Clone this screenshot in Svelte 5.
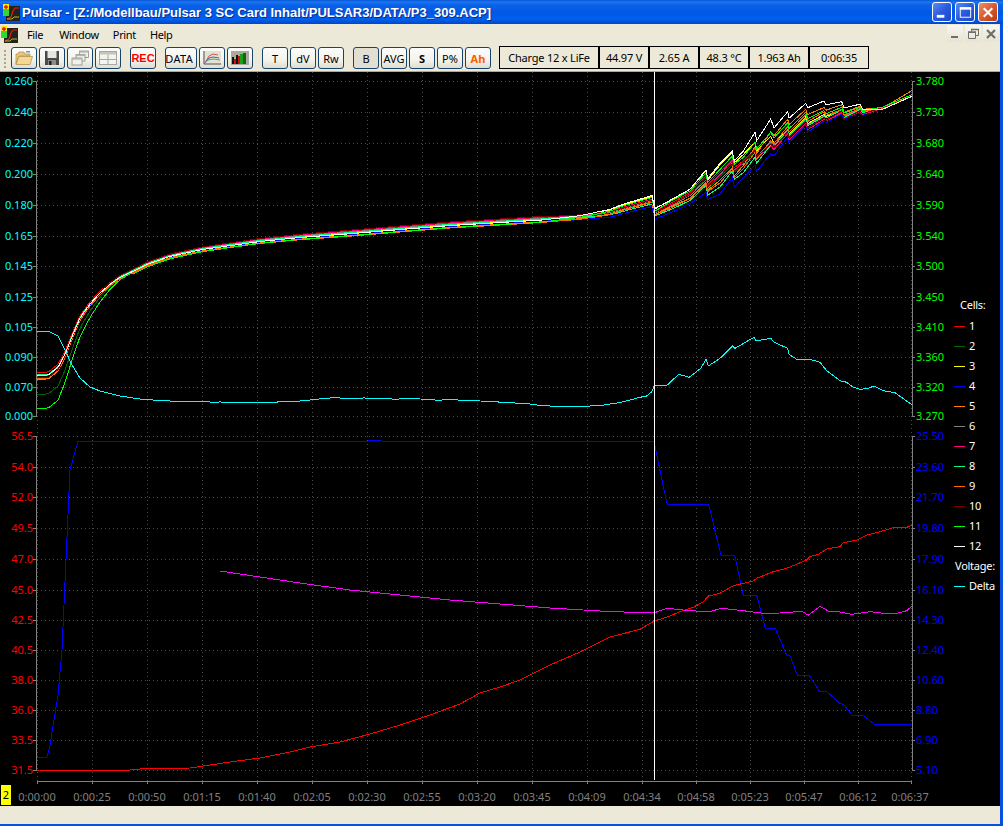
<script>
  const topY = [81, 112, 143, 174, 205, 236, 266, 297, 327, 357, 387, 416];
  const lowY = [436, 467, 497, 528, 559, 590, 620, 650, 680, 710, 740, 770];
  const gridX = [37, 92, 147, 202, 257, 312, 367, 422, 477, 532, 587, 642, 696, 750, 804, 858, 911];
  const OFF = 72;

  const axes = [
    { cls: 'cyan', ys: topY, side: 'l', labels: ['0.260', '0.240', '0.220', '0.200', '0.180', '0.165', '0.145', '0.125', '0.105', '0.090', '0.070', '0.000'] },
    { cls: 'green', ys: topY, side: 'r', labels: ['3.780', '3.730', '3.680', '3.640', '3.590', '3.540', '3.500', '3.450', '3.410', '3.360', '3.320', '3.270'] },
    { cls: 'red', ys: lowY, side: 'l', labels: ['56.5', '54.0', '52.0', '49.5', '47.0', '45.0', '42.5', '40.5', '38.0', '36.0', '33.5', '31.5'] },
    { cls: 'blue', ys: lowY, side: 'r', labels: ['25.50', '23.60', '21.70', '19.80', '17.90', '16.10', '14.30', '12.40', '10.60', '8.80', '6.90', '5.10'] }
  ];
  const times = ['0:00:00', '0:00:25', '0:00:50', '0:01:15', '0:01:40', '0:02:05', '0:02:30', '0:02:55', '0:03:20', '0:03:45', '0:04:09', '0:04:34', '0:04:58', '0:05:23', '0:05:47', '0:06:12', '0:06:37'];

  // f: place in the spread after the cursor (1 = upper), l: same late in the charge,
  // b: place in the band before the cursor (-.5 = upper), o: offset at the start
  const cells = [
    { n: 1, c: '#ff0000', f: 0.68, l: 0.2, b: -0.3, o: -3 },
    { n: 2, c: '#006400', f: 0.52, l: 0.28, b: 0, o: 18 },
    { n: 3, c: '#ffff00', f: 0.92, l: 0.35, b: 0.05, o: -1 },
    { n: 4, c: '#0000ff', f: 0, l: 0, b: 0.3, o: -1 },
    { n: 5, c: '#ff8000', f: 0.42, l: 0.72, b: 0.4, o: 2 },
    { n: 6, c: '#808080', f: 0.56, l: 0.3, b: -0.2, o: 0 },
    { n: 7, c: '#ff0080', f: 0.64, l: 0.1, b: -0.4, o: 3 },
    { n: 8, c: '#00ff80', f: 0.24, l: 0.25, b: -0.1, o: -1 },
    { n: 9, c: '#ff6600', f: 0.36, l: 0.42, b: 0.5, o: 1 },
    { n: 10, c: '#800000', f: 0.6, l: 0.18, b: -0.5, o: 3 },
    { n: 11, c: '#00ff00', f: 0.82, l: 0.55, b: 0.45, o: 31 },
    { n: 12, c: '#ffffff', f: 1, l: 1, b: 0.1, o: -1 }
  ];

  const base = [[37, 376], [48, 376], [58, 368], [65, 355], [72, 337], [80, 318], [90, 304], [100, 293], [110, 284], [120, 277], [135, 270], [147, 264], [170, 256], [203, 249], [260, 241], [300, 237], [352, 233], [400, 229], [450, 225], [500, 222], [550, 219], [580, 217], [610, 213], [630, 207], [652, 201]];

  // x, upper edge, lower edge, in the frame of a 3x crop starting at (640,80)
  const fan = [[44, 385, 418], [100, 355, 395], [150, 325, 372], [198, 268, 335], [203, 295, 362], [240, 250, 340], [277, 212, 295], [283, 240, 320], [310, 215, 295], [345, 158, 255], [350, 180, 272], [392, 118, 220], [402, 142, 225], [443, 98, 170], [447, 112, 188], [497, 70, 135], [503, 85, 155], [552, 63, 122], [558, 75, 130], [605, 67, 100], [612, 85, 122], [660, 72, 95], [668, 85, 105], [730, 85, 82], [815, 46, 48]];

  function jitter(i, k) {
    const v = Math.sin(i * 12.9898 + k * 78.233) * 43758.5453;
    return (v - Math.floor(v)) - 0.5;
  }

  function baseAt(x) {
    for (let k = 1; k < base.length; k++) {
      if (x <= base[k][0]) {
        const [x0, y0] = base[k - 1];
        const [x1, y1] = base[k];
        return y0 + ((x - x0) / (x1 - x0)) * (y1 - y0);
      }
    }
    return base[base.length - 1][1];
  }

  function cellPoints(cell, i) {
    const pts = [];
    for (let x = 37; x <= 652; x += 3) {
      const decay = x <= 58 ? 1 : x >= 130 ? 0 : Math.pow((130 - x) / 72, 1.6);
      const spread = x < 350 ? 2.5 + ((x - 37) / 313) * 3.5 : x < 560 ? 6 : 6 + ((x - 560) / 92) * 5;
      const w = x < 540 ? 0 : Math.min(1, (x - 540) / 80);
      const place = cell.b * (1 - w) + (0.5 - cell.f) * w;
      const extra = cell.n === 11 && x > 130 && x < 260 ? (1 - (x - 130) / 130) * 1.5 : 0;
      pts.push([x, baseAt(x) + cell.o * decay + place * spread + extra]);
    }
    fan.forEach(([zx, up, low], k) => {
      const t = zx < 300 ? 0 : zx > 420 ? 1 : (zx - 300) / 120;
      const f = cell.f * (1 - t) + cell.l * t;
      let zy = low + (up - low) * f + jitter(i, k) * 6;
      if (cell.n === 5 && k === fan.length - 1) zy = 32;
      pts.push([640 + zx / 3, 80 + zy / 3]);
    });
    return pts;
  }

  function zoomed(list, ox, oy) {
    return list.map(([x, y]) => [ox + x / 3, oy + y / 3]);
  }
  function wiggle(list) {
    const out = [];
    list.forEach((p, k) => {
      out.push(p);
      const q = list[k + 1];
      if (q && q[0] - p[0] > 15) {
        const n = Math.floor((q[0] - p[0]) / 8);
        for (let s = 1; s < n; s++) {
          const t = s / n;
          out.push([p[0] + (q[0] - p[0]) * t, p[1] + (q[1] - p[1]) * t + jitter(k, s) * 1.6]);
        }
      }
    });
    return out;
  }
  function str(pts) {
    return pts.map(([x, y]) => `${x.toFixed(1)},${(y - OFF).toFixed(1)}`).join(' ');
  }

  const delta = str([...wiggle([[37, 331], [48, 331], [58, 336], [65, 350], [72, 365], [80, 378], [90, 387], [100, 391], [120, 396], [140, 399], [180, 402], [220, 402], [260, 402], [300, 401], [340, 398], [380, 399], [420, 399], [480, 401], [530, 404], [560, 406], [590, 406], [610, 404], [630, 400]]),
    ...zoomed([[0, 202], [20, 198], [35, 185], [44, 165], [82, 165], [116, 133], [148, 142], [182, 115], [198, 88], [205, 108], [240, 85], [278, 48], [285, 55], [342, 22], [348, 33], [392, 25], [402, 37], [443, 55], [447, 73], [470, 88], [510, 88], [540, 97], [560, 122], [600, 152], [620, 157], [640, 172], [660, 178], [680, 176], [703, 168], [730, 182], [765, 188], [815, 224]], 640, 330)]);

  const current = str([[37, 757], [47, 757], [50, 745], [58, 695], [62, 650], [66, 560], [70, 470], [78, 441], [368, 441], [370, 440], [380, 440], [382, 441], [654, 441], [664, 490],
    ...zoomed([[82, 43], [206, 43], [243, 196], [284, 196], [310, 316], [350, 316], [376, 414], [405, 414], [440, 495], [450, 497], [472, 555], [507, 555], [538, 603], [558, 603], [600, 640], [612, 645], [637, 676], [670, 676], [703, 703], [815, 703]], 640, 490)]);

  const voltage = str([[37, 770], [130, 770], [140, 769], [190, 768], [230, 762], [260, 758], [290, 752], [310, 747], [340, 742], [370, 734], [400, 725], [430, 715], [460, 704], [480, 693], [500, 687], [520, 680], [550, 665], [580, 652], [610, 637],
    ...zoomed([[0, 418], [44, 392], [80, 382], [120, 365], [160, 352], [190, 335], [205, 318], [240, 310], [280, 287], [340, 273], [350, 265], [400, 245], [440, 235], [500, 210], [510, 200], [535, 193], [560, 177], [600, 170], [610, 158], [650, 150], [680, 135], [720, 125], [760, 113], [800, 112], [815, 106]], 640, 490)]);

  const temp = str([[220, 571], [260, 577], [300, 583], [350, 590], [400, 595], [450, 600], [500, 604], [550, 608], [600, 611],
    ...zoomed([[0, 368], [44, 368], [80, 355], [130, 360], [205, 366], [245, 355], [300, 361], [370, 370], [420, 369], [470, 365], [490, 366], [505, 376], [540, 349], [565, 363], [600, 366], [635, 373], [690, 365], [730, 370], [770, 370], [800, 362], [815, 349]], 640, 490)]);

  const cellLines = cells.map((c, i) => ({ c: c.c, pts: str(cellPoints(c, i)) }));
  const legendY = cells.map((c, i) => 326 + i * 20 - OFF);
  const panels = [
    { t: 'Charge 12 x LiFe', w: 100 },
    { t: '44.97 V', w: 50 },
    { t: '2.65 A', w: 50 },
    { t: '48.3 °C', w: 50 },
    { t: '1.963 Ah', w: 60 },
    { t: '0:06:35', w: 60 }
  ];
</script>

{#snippet appIcon()}
  <svg class="appicon" viewBox="0 0 17 17" width="17" height="17">
    <rect x="3" y="2" width="14" height="15" fill="#20241c" />
    <path d="M4 15 L8 13 L10 7 L12 4 L16 4" fill="none" stroke="#e02010" stroke-width="1.2" />
    <path d="M4 15 H9 L11 13 H16" fill="none" stroke="#c8b030" stroke-width="1" />
    <rect x="0" y="0" width="6" height="5" fill="#ffe800" />
    <rect x="0" y="5" width="6" height="7" fill="#30d830" />
    <path d="M3 1 V5 M1 3 H5" stroke="#e81010" stroke-width="1.4" />
  </svg>
{/snippet}

<div class="win">
  <header class="title">
    {@render appIcon()}
    <span class="caption">Pulsar - [Z:/Modellbau/Pulsar 3 SC Card Inhalt/PULSAR3/DATA/P3_309.ACP]</span>
    <div class="caps">
      <button class="cap" aria-label="Minimize"><svg viewBox="0 0 19 19" width="19" height="19"><rect x="4" y="12" width="8" height="3" fill="#fff" /></svg></button>
      <button class="cap" aria-label="Maximize"><svg viewBox="0 0 19 19" width="19" height="19"><rect x="4.5" y="4.5" width="11" height="10" fill="none" stroke="#fff" /><rect x="4" y="4" width="12" height="2.5" fill="#fff" /></svg></button>
      <button class="cap close" aria-label="Close"><svg viewBox="0 0 19 19" width="19" height="19"><path d="M5 5 L14 14 M14 5 L5 14" stroke="#fff" stroke-width="2.2" /></svg></button>
    </div>
  </header>

  <div class="body">
    <nav class="menubar">
      <span class="mdi-icon">{@render appIcon()}</span>
      <span class="menu first">File</span>
      <span class="menu second">Window</span>
      <span class="menu">Print</span>
      <span class="menu">Help</span>
      <div class="mdi">
        <button class="mdib" aria-label="Minimize"><svg viewBox="0 0 16 16" width="16" height="16"><rect x="4" y="10" width="7" height="2" fill="#6f6f6a" /></svg></button>
        <button class="mdib" aria-label="Restore"><svg viewBox="0 0 16 16" width="16" height="16"><path d="M6.5 5.5 V3.5 H13.5 V9.5 H11 M3.5 6.5 H10.5 V12.5 H3.5 Z" fill="none" stroke="#6f6f6a" /><path d="M3 6 H11 M6 3.5 H14" stroke="#6f6f6a" stroke-width="1.4" /></svg></button>
        <button class="mdib" aria-label="Close"><svg viewBox="0 0 16 16" width="16" height="16"><path d="M4 4 L12 12 M12 4 L4 12" stroke="#6f6f6a" stroke-width="2.2" /></svg></button>
      </div>
    </nav>

    <div class="toolbar">
      <span class="grip"></span>
      <div class="group">
        <button class="tb" aria-label="Open">
          <svg viewBox="0 0 20 16" width="20" height="16"><path d="M2 14 V4 H4 L5 2 H10 L11 4 H16 V6 H5 L2 14 Z" fill="#e8c878" stroke="#b08a48" stroke-width=".7" /><path d="M2 14.500 L5 6.500 H18.500 L16 14.500 Z" fill="#f5d992" stroke="#b08a48" stroke-width=".7" /><rect x="12" y="1" width="4" height="1.500" fill="#4aa0d8" /></svg>
        </button>
        <button class="tb" aria-label="Save">
          <svg viewBox="0 0 16 16" width="16" height="16"><path d="M1 1 H15 V15 H1 Z" fill="#4a4a4a" /><rect x="3.500" y="1" width="9" height="7" fill="#e6e6e0" /><rect x="4" y="10" width="8" height="5" fill="#8c8c8c" /><rect x="5" y="11" width="2.500" height="4" fill="#222" /></svg>
        </button>
        <button class="tb" aria-label="Cascade">
          <svg viewBox="0 0 20 16" width="20" height="16"><g fill="#f2f2ec" stroke="#8d8d88" stroke-width=".8"><rect x="9.500" y="1" width="9" height="6.500" /><rect x="6" y="4.500" width="9" height="6.500" /><rect x="2" y="8" width="10" height="7" /></g><g fill="#b4b4ae"><rect x="9.500" y="1" width="9" height="1.600" /><rect x="6" y="4.500" width="9" height="1.600" /><rect x="2" y="8" width="10" height="1.600" /></g></svg>
        </button>
        <button class="tb" aria-label="Tile">
          <svg viewBox="0 0 18 14" width="18" height="14"><rect x=".5" y=".5" width="17" height="13" fill="#f4f4ee" stroke="#a8a8a2" /><rect x="1" y="1" width="16" height="2.500" fill="#c4c4be" /><path d="M9 3.500 V13.500 M1 8.500 H17" stroke="#a8a8a2" fill="none" /></svg>
        </button>
      </div>
      <div class="group"><button class="tb rec">REC</button></div>
      <div class="group">
        <button class="tb data">DATA</button>
        <button class="tb" aria-label="Line chart">
          <svg viewBox="0 0 18 14" width="18" height="14"><rect width="18" height="14" fill="#e4e1d2" /><path d="M1 0 V13 H18" fill="none" stroke="#555" /><path d="M2 12 L6 5 L10 3 L15 4" fill="none" stroke="#e05050" /><path d="M2 12 L6 7 L10 6 L16 7" fill="none" stroke="#4060d0" /><path d="M2 12 L5 9 L10 8 L17 9" fill="none" stroke="#50b050" /></svg>
        </button>
        <button class="tb" aria-label="Bar chart">
          <svg viewBox="0 0 18 14" width="18" height="14"><rect width="18" height="14" fill="#a9a9a2" /><rect x="1" y="6" width="2" height="7" fill="#111" /><rect x="3" y="8" width="2" height="5" fill="#d01010" /><rect x="5" y="4" width="2" height="9" fill="#111" /><rect x="7" y="5" width="2" height="8" fill="#d01010" /><rect x="9" y="3" width="3" height="10" fill="#18a018" /><rect x="12" y="2" width="3" height="11" fill="#0d6a0d" /></svg>
        </button>
      </div>
      <div class="group">
        <button class="tb">T</button>
        <button class="tb">dV</button>
        <button class="tb">Rw</button>
      </div>
      <div class="group">
        <button class="tb on">B</button>
        <button class="tb">AVG</button>
        <button class="tb bold">S</button>
        <button class="tb">P%</button>
        <button class="tb ah">Ah</button>
      </div>
      <div class="panels">
        {#each panels as p}
          <span class="panel" class:w50={p.w === 50} class:w60={p.w === 60} class:w100={p.w === 100}>{p.t}</span>
        {/each}
      </div>
    </div>

    <div class="chart">
      <svg viewBox="0 0 1000 734" width="1000" height="734">
        <g class="grid">
          {#each [...topY, ...lowY] as y}
            <line x1="37" x2="911" y1={y - OFF + 0.5} y2={y - OFF + 0.5} />
          {/each}
          {#each gridX as x}
            <line x1={x + 0.5} x2={x + 0.5} y1="0" y2="709" />
          {/each}
        </g>

        <g class="axis">
          <path d="M33 9.500 H36.500 V344.500 H33 M33 364.500 H36.500 V698.500 H33" />
          <path d="M915 9.500 H912.500 V344.500 H915 M915 364.500 H912.500 V698.500 H915" />
          <path d="M37 709.500 H911" />
          {#each axes as a}
            {#each a.ys as y}
              {#if a.side === 'l'}
                <path d="M33 {y - OFF + 0.5} H36" />
              {:else}
                <path d="M913 {y - OFF + 0.5} H915" />
              {/if}
            {/each}
          {/each}
          {#each gridX as x}
            <path d="M{x + 0.5} 709 V712" />
          {/each}
        </g>

        {#each axes as a}
          {#each a.labels as label, i}
            <text class="val {a.cls}" class:end={a.side === 'l'} x={a.side === 'l' ? 33 : 916} y={a.ys[i] - OFF + 4}>{label}</text>
          {/each}
        {/each}

        {#each cellLines as l}
          <polyline class="trace" points={l.pts} stroke={l.c} />
        {/each}
        <polyline class="trace" points={delta} stroke="#00ffff" />
        <polyline class="trace" points={current} stroke="#0000ff" />
        <polyline class="trace" points={voltage} stroke="#ff0000" />
        <polyline class="trace" points={temp} stroke="#ff00ff" />

        <line class="cursor" x1="654.5" x2="654.5" y1="0" y2="708" />

        <rect x="1" y="713" width="10" height="20" fill="#ffff00" />
        <text class="badge" x="6" y="727">2</text>

        {#each times as t, i}
          <text class="time" x={gridX[i] + (i === 16 ? -1 : 0)} y="729">{t}</text>
        {/each}

        <text class="leg" x="960" y="237">Cells:</text>
        {#each cells as c, i}
          <line class="key" x1="954" x2="965" y1={legendY[i] + 0.5} y2={legendY[i] + 0.5} stroke={c.c} />
          <text class="leg" x="969" y={legendY[i] + 4}>{c.n}</text>
        {/each}
        <text class="leg" x="955" y="498">Voltage:</text>
        <line class="key" x1="954" x2="965" y1="514.500" y2="514.500" stroke="#00ffff" />
        <text class="leg" x="969" y="518">Delta</text>
      </svg>
    </div>

    <footer class="status"></footer>
  </div>
</div>

<style>
  :global(body) { margin: 0; background: #000; }
  .win {
    width: 1003px;
    height: 826px;
    display: flex;
    flex-direction: column;
    overflow: hidden;
    font-family: "Noto Sans", "Open Sans", sans-serif;
    font-size: 11px;
    color: #000;
  }
  .title {
    height: 24px;
    flex: none;
    display: flex;
    align-items: center;
    padding-left: 3px;
    box-sizing: border-box;
    background: linear-gradient(180deg, #0a54d4 0, #1a78f2 8%, #0b62e8 20%, #0058e4 55%, #0060ee 80%, #0046c4 100%);
  }
  .appicon { display: block; flex: none; }
  .caption {
    margin-left: 2px;
    color: #fff;
    font: bold 13px "Liberation Sans", Arial, sans-serif;
    text-shadow: 1px 1px 0 #0a2a90;
    white-space: nowrap;
  }
  .caps { margin-left: auto; margin-right: 5px; display: flex; gap: 3px; }
  .cap {
    width: 20px;
    height: 20px;
    padding: 0;
    border: 1px solid #fff;
    border-radius: 3px;
    display: flex;
    align-items: center;
    justify-content: center;
    background: linear-gradient(135deg, #5a8cf0 0, #2a5ae0 50%, #1c48c8 100%);
  }
  .cap.close { background: linear-gradient(135deg, #e89070 0, #d85a30 50%, #b83a10 100%); }

  .body {
    flex: 1;
    min-height: 0;
    display: flex;
    flex-direction: column;
    background: #ece9d8;
    border-right: 3px solid #0a50e0;
    border-bottom: 2px solid #0a50e0;
  }
  .menubar {
    height: 23px;
    flex: none;
    box-sizing: border-box;
    padding-bottom: 2px;
    display: flex;
    align-items: center;
  }
  .mdi-icon { width: 18px; padding-left: 1px; flex: none; }
  .menu { margin-left: 14px; letter-spacing: -0.35px; }
  .menu.first { margin-left: 8px; }
  .menu.second { margin-left: 16px; }
  .mdi { margin-left: auto; margin-right: 1px; display: flex; gap: 2px; align-self: flex-start; margin-top: 1px; }
  .mdib {
    width: 16px;
    height: 17px;
    padding: 0;
    border: 0;
    display: flex;
    align-items: center;
    justify-content: center;
    background: linear-gradient(180deg, #f8f7f0, #e6e3d4);
  }

  .toolbar {
    height: 25px;
    flex: none;
    box-sizing: border-box;
    display: flex;
    align-items: flex-start;
    border-bottom: 1px solid #aca899;
    padding-left: 4px;
  }
  .grip {
    width: 2px;
    height: 18px;
    margin-top: 3px;
    margin-right: 5px;
    background: repeating-linear-gradient(180deg, #a8a590 0 2px, transparent 2px 4px);
    flex: none;
  }
  .group { display: flex; gap: 2px; margin-right: 9px; }
  .tb {
    width: 26px;
    height: 22px;
    padding: 0;
    box-sizing: border-box;
    border: 1px solid #17456e;
    border-radius: 3px;
    background: linear-gradient(180deg, #fcfcfa 0, #f4f3ec 60%, #e0ddcf 100%);
    display: flex;
    align-items: center;
    justify-content: center;
    font: 11px "Noto Sans", "Open Sans", sans-serif;
    color: #000;
    overflow: hidden;
    white-space: nowrap;
  }
  .rec { color: #ff0000; font-weight: bold; font-family: "Liberation Sans", sans-serif; }
  .data { width: 32px; justify-content: flex-end; padding-right: 3px; letter-spacing: 0.3px; }
  .on { background: #e2dfd2; }
  .bold { font-weight: bold; }
  .ah { color: #ff5a00; font-weight: bold; }
  .panels { display: flex; margin-left: -1px; }
  .panel {
    height: 23px;
    box-sizing: border-box;
    border: 1px solid #000;
    display: flex;
    align-items: center;
    justify-content: center;
    white-space: nowrap;
    margin-top: -1px;
    letter-spacing: -0.2px;
  }
  .w50 { width: 50px; }
  .w60 { width: 60px; }
  .w100 { width: 100px; }

  .chart { flex: none; height: 734px; background: #000; }
  .chart svg { display: block; }
  .status { flex: 1; background: #ece9d8; }

  .grid line { stroke: #4c4c4c; stroke-width: 1; stroke-dasharray: 1 3; shape-rendering: crispEdges; }
  .axis path { stroke: #808080; stroke-width: 1; fill: none; shape-rendering: crispEdges; }
  .trace { fill: none; stroke-width: 1; shape-rendering: crispEdges; }
  .cursor { stroke: #fff; stroke-width: 1; shape-rendering: crispEdges; }
  .key { stroke-width: 1; shape-rendering: crispEdges; }
  .val { font-size: 11px; }
  .end { text-anchor: end; }
  .cyan { fill: #00ffff; }
  .green { fill: #00ff00; }
  .red { fill: #ff0000; }
  .blue { fill: #0000ff; }
  .badge { font-size: 11px; fill: #000; text-anchor: middle; }
  .time { font-size: 11px; fill: #808080; text-anchor: middle; }
  .leg { font-size: 11px; fill: #fff; letter-spacing: -0.25px; }
</style>
